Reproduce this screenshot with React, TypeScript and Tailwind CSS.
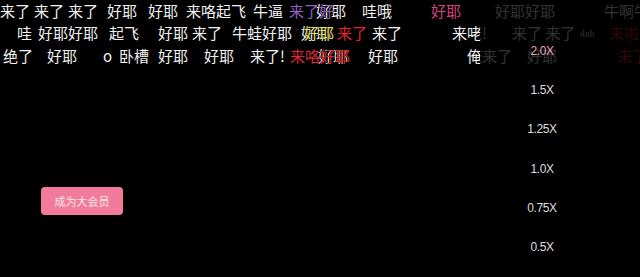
import React from "react";

type Comment = { text: string; x: number; row: number; color?: string; small?: boolean };

const ROW_TOP = [3, 25, 48];

const WHITE = "#f2f2f2";
const PURPLE = "#9264bd";
const YELLOW = "#e8e26a";
const RED = "#e3262e";
const PINK = "#d8437e";

const comments: Comment[] = [
  // row 1
  { text: "来了", x: 0, row: 0 },
  { text: "来了", x: 34, row: 0 },
  { text: "来了", x: 68, row: 0 },
  { text: "好耶", x: 107, row: 0 },
  { text: "好耶", x: 148, row: 0 },
  { text: "来咯起飞", x: 186, row: 0 },
  { text: "牛逼", x: 253, row: 0 },
  { text: "好耶", x: 316, row: 0 },
  { text: "来了好", x: 289, row: 0, color: PURPLE },
  { text: "哇哦", x: 362, row: 0 },
  { text: "好耶", x: 431, row: 0, color: PINK },
  { text: "好耶好耶", x: 495, row: 0 },
  { text: "牛啊牛", x: 604, row: 0 },
  // row 2
  { text: "哇", x: 17, row: 1 },
  { text: "好耶好耶", x: 38, row: 1 },
  { text: "起飞", x: 109, row: 1 },
  { text: "好耶", x: 158, row: 1 },
  { text: "来了", x: 192, row: 1 },
  { text: "牛蛙好耶", x: 232, row: 1 },
  { text: "好耶", x: 301, row: 1 },
  { text: "好耶", x: 304, row: 1, color: YELLOW },
  { text: "来了", x: 337, row: 1, color: RED },
  { text: "来了", x: 372, row: 1 },
  { text: "来咾!", x: 452, row: 1 },
  { text: "来了 来了", x: 512, row: 1 },
  { text: "ılıılı", x: 580, row: 1, small: true },
  { text: "来啦", x: 609, row: 1, color: RED },
  // row 3
  { text: "绝了", x: 3, row: 2 },
  { text: "好耶", x: 47, row: 2 },
  { text: "o", x: 103, row: 2 },
  { text: "卧槽", x: 119, row: 2 },
  { text: "好耶", x: 158, row: 2 },
  { text: "好耶", x: 204, row: 2 },
  { text: "来了!", x: 250, row: 2 },
  { text: "好耶", x: 318, row: 2 },
  { text: "来咯好耶", x: 290, row: 2, color: RED },
  { text: "好耶", x: 368, row: 2 },
  { text: "俺来了", x: 467, row: 2 },
  { text: "好耶", x: 527, row: 2 },
  { text: "来了", x: 617, row: 2, color: RED },
];

const speeds = ["2.0X", "1.5X", "1.25X", "1.0X", "0.75X", "0.5X"];

export default function App() {
  return (
    <div className="relative h-[277px] w-[640px] overflow-hidden bg-black font-['Noto_Sans_CJK_SC','Noto_Sans',sans-serif]">
      {/* player controls */}
      <div className="pl-[41px] pt-[187px]">
        <button className="flex h-[28px] w-[82px] items-center justify-center rounded-[4px] bg-[#f27b9b] text-[11px] text-[#fbe6ec]">
          成为大会员
        </button>
      </div>

      {/* danmaku layer */}
      <div className="absolute inset-0">
        {comments.map((c, i) => (
          <span
            key={i}
            className={
              c.small
                ? "absolute whitespace-pre text-[9px] leading-[15px] [text-shadow:0_0_1px_#000]"
                : "absolute whitespace-pre text-[15px] leading-[15px] [text-shadow:0_0_1px_#000,0_0_1px_#000]"
            }
            style={{ left: c.x, top: ROW_TOP[c.row] + (c.small ? 1 : 0), color: c.color ?? WHITE }}
          >
            {c.text}
          </span>
        ))}
      </div>

      {/* speed menu */}
      <div className="absolute right-0 top-0 h-full w-[160px] bg-black/80">
        <div className="flex w-[124px] flex-col pt-[31px] font-['Liberation_Sans',sans-serif]">
          {speeds.map((s, i) => (
            <div
              key={s}
              className={
                i === 0
                  ? "flex h-[39.3px] items-center justify-center text-[12px] tracking-[-0.4px] text-[#eaa2bb]"
                  : "flex h-[39.3px] items-center justify-center text-[12px] tracking-[-0.4px] text-[#dedede]"
              }
            >
              {s}
            </div>
          ))}
        </div>
      </div>
    </div>
  );
}
